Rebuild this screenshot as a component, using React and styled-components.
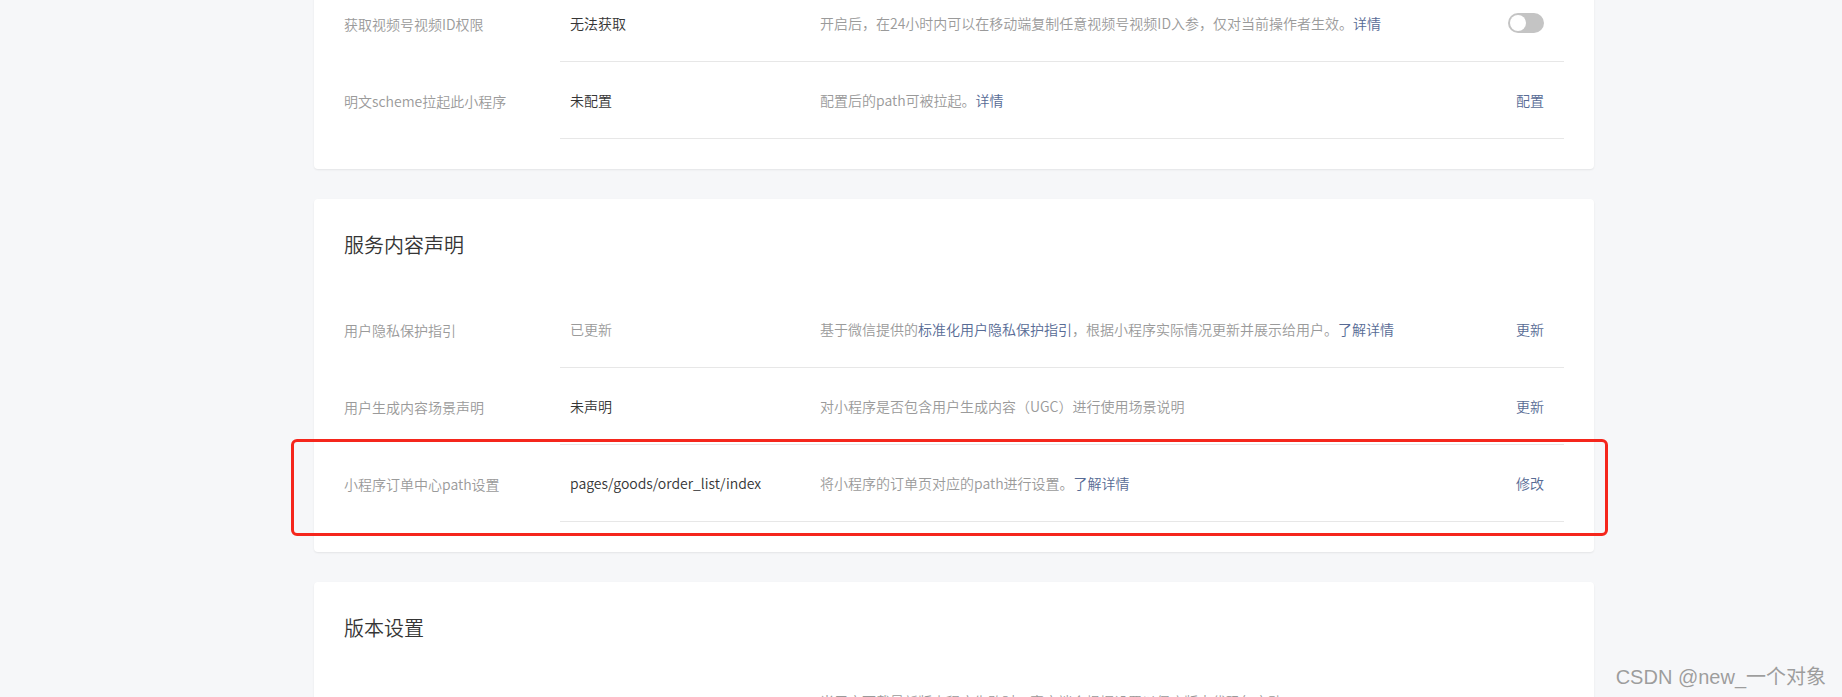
import React from "react";
import styled, { createGlobalStyle } from "styled-components";

const sections = [
  {
    title: null,
    rows: [
      {
        label: "获取视频号视频ID权限",
        value: "无法获取",
        desc: [["开启后，在24小时内可以在移动端复制任意视频号视频ID入参，仅对当前操作者生效。"], ["详情", true]],
        toggle: true,
      },
      {
        label: "明文scheme拉起此小程序",
        value: "未配置",
        desc: [["配置后的path可被拉起。"], ["详情", true]],
        action: "配置",
      },
    ],
  },
  {
    title: "服务内容声明",
    rows: [
      {
        label: "用户隐私保护指引",
        value: "已更新",
        muted: true,
        desc: [
          ["基于微信提供的"],
          ["标准化用户隐私保护指引", true],
          ["，根据小程序实际情况更新并展示给用户。"],
          ["了解详情", true],
        ],
        action: "更新",
      },
      {
        label: "用户生成内容场景声明",
        value: "未声明",
        desc: [["对小程序是否包含用户生成内容（UGC）进行使用场景说明"]],
        action: "更新",
      },
      {
        label: "小程序订单中心path设置",
        value: "pages/goods/order_list/index",
        desc: [["将小程序的订单页对应的path进行设置。"], ["了解详情", true]],
        action: "修改",
        highlight: true,
      },
    ],
  },
  {
    title: "版本设置",
    rows: [
      {
        label: "基础库最低版本设置",
        value: "未设置",
        desc: [
          ["当用户下载最新版小程序失败时，客户端会根据设置以保底版本代码包启动，"],
          ["\n"],
          ["保障用户可正常使用小程序。"],
        ],
        action: "设置",
      },
    ],
  },
];

const App = () => {
  return (
    <Page>
      <GlobalStyle />
      <Content>
        {sections.map((section, i) => (
          <Card key={i} first={i === 0}>
            {section.title && <CardTitle>{section.title}</CardTitle>}
            {section.rows.map((row) => (
              <Row key={row.label}>
                {row.highlight && <Highlight />}
                <Label>{row.label}</Label>
                <Body>
                  <Value muted={row.muted}>{row.value}</Value>
                  <Desc>
                    {row.desc.map(([text, link], k) =>
                      text === "\n" ? (
                        <br key={k} />
                      ) : link ? (
                        <Link key={k}>{text}</Link>
                      ) : (
                        <span key={k}>{text}</span>
                      )
                    )}
                  </Desc>
                  <Action>{row.toggle ? <Switch /> : <Link>{row.action}</Link>}</Action>
                </Body>
              </Row>
            ))}
          </Card>
        ))}
      </Content>
      <Watermark>CSDN @new_一个对象</Watermark>
    </Page>
  );
};

export default App;

const GlobalStyle = createGlobalStyle`
  html, body {
    margin: 0;
    padding: 0;
    background: #f6f7f9;
  }
  body {
    font-family: "Noto Sans CJK SC", "Noto Sans", sans-serif;
    font-weight: 350;
    -webkit-font-smoothing: antialiased;
  }
`;

const Page = styled.div`
  position: relative;
  height: 697px;
  overflow: hidden;
  background: #f6f7f9;
`;

const Content = styled.div`
  display: flex;
  flex-direction: column;
  gap: 30px;
  width: 1280px;
  margin-left: 314px;
  margin-top: -15px;
`;

const Card = styled.div`
  background: #fff;
  border-radius: 4px;
  box-shadow: 0 1px 2px rgba(0, 0, 0, 0.08);
  padding: ${({ first }) => (first ? "0 30px 30px" : "32px 30px 30px")};
`;

const CardTitle = styled.div`
  font-size: 20px;
  line-height: 28px;
  color: #353535;
  margin-bottom: 32px;
`;

const Row = styled.div`
  position: relative;
  display: flex;
  align-items: stretch;
  font-size: 14px;
`;

const Highlight = styled.div`
  position: absolute;
  left: -53px;
  right: -44px;
  top: -6px;
  bottom: -14px;
  border: 3px solid #f5261c;
  border-radius: 6px;
  pointer-events: none;
`;

const Label = styled.div`
  display: flex;
  align-items: center;
  width: 216px;
  flex-shrink: 0;
  color: #9a9a9a;
`;

const Body = styled.div`
  flex: 1;
  display: flex;
  align-items: center;
  min-height: 76px;
  padding: 0 20px 0 10px;
  border-bottom: 1px solid #e7e7e7;
`;

const Value = styled.div`
  width: 250px;
  flex-shrink: 0;
  color: ${({ muted }) => (muted ? "#9a9a9a" : "#353535")};
`;

const Desc = styled.div`
  flex: 1;
  color: #9a9a9a;
  line-height: 22px;
`;

const Link = styled.span`
  color: #576b95;
  cursor: pointer;
`;

const Action = styled.div`
  display: flex;
  justify-content: flex-end;
  min-width: 60px;
`;

const Switch = styled.span`
  position: relative;
  display: inline-block;
  width: 36px;
  height: 20px;
  border-radius: 10px;
  background: #c4c4c4;
  &::after {
    content: "";
    position: absolute;
    left: 2px;
    top: 2px;
    width: 16px;
    height: 16px;
    border-radius: 50%;
    background: #fff;
  }
`;

const Watermark = styled.div`
  position: absolute;
  right: 16px;
  bottom: 7px;
  font-family: "Liberation Sans", "Noto Sans CJK SC", sans-serif;
  font-weight: 400;
  font-size: 20px;
  color: #9d9d9d;
  text-shadow: 0 0 1px #fff;
`;
